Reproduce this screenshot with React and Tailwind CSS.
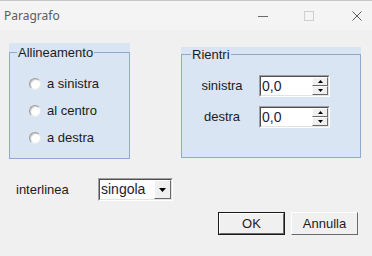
import React from "react";

const font = { fontFamily: '"Liberation Sans", Arial, sans-serif' };

const Radio = ({ label }) => (
  <div className="flex items-center h-[27px]">
    <span className="w-[12px] h-[12px] rounded-full bg-white border border-t-[#9a9a9a] border-l-[#9a9a9a] border-r-[#e8e8e8] border-b-[#e8e8e8] shadow-[inset_1px_1px_1px_#c8c8c8]" />
    <span className="ml-[6px] text-[13px] leading-[15px] text-[#1b1b1b]">{label}</span>
  </div>
);

const Arrow = ({ up }) => (
  <svg width="5" height="3" viewBox="0 0 5 3">
    {up ? <path d="M2.5 0 L5 3 L0 3 Z" fill="#000" /> : <path d="M0 0 L5 0 L2.5 3 Z" fill="#000" />}
  </svg>
);

const SpinBtn = ({ up }) => (
  <div className="flex-1 flex items-center justify-center bg-[#f0f0f0] border border-t-white border-l-white border-r-[#696969] border-b-[#696969]">
    <Arrow up={up} />
  </div>
);

// sunken numeric field with up/down spinner
const Spinner = ({ value }) => (
  <div className="w-[71px] h-[22px] border border-t-[#a0a0a0] border-l-[#a0a0a0] border-r-white border-b-white">
    <div className="h-full flex bg-white border border-t-[#505050] border-l-[#505050] border-r-[#e3e3e3] border-b-[#e3e3e3]">
      <span className="flex-1 pl-[1px] text-[14px] leading-[18px] text-[#1a1a3a]">{value}</span>
      <div className="w-[16px] flex flex-col">
        <SpinBtn up />
        <SpinBtn />
      </div>
    </div>
  </div>
);

const WinButton = ({ label, isDefault }) => (
  <div
    className={
      "w-[67px] h-[23px] " +
      (isDefault ? "border border-[#1a1a1a]" : "")
    }
  >
    <div className="h-full flex items-center justify-center bg-[#f0f0f0] border border-t-white border-l-white border-r-[#696969] border-b-[#696969] text-[13px] text-[#1b1b1b]">
      {label}
    </div>
  </div>
);

export default function App() {
  return (
    <div className="w-[372px] h-[256px] bg-[#f0f0f0] flex flex-col overflow-hidden" style={font}>
      {/* Title bar */}
      <div className="h-[30px] flex items-center bg-[#f4f4f4] border-t border-[#c8c8c8]">
        <span
          className="ml-[4px] text-[12px] text-[#5c5c5c]"
          style={{ fontFamily: '"Noto Sans", "Open Sans", sans-serif' }}
        >
          Paragrafo
        </span>
        <div className="ml-auto flex items-center mr-[10px]">
          <svg width="10" height="10" viewBox="0 0 10 10">
            <path d="M0 5.5 H10" stroke="#6a6a6a" strokeWidth="1" />
          </svg>
          <svg width="10" height="10" viewBox="0 0 10 10" className="ml-[36px]">
            <rect x="0.5" y="0.5" width="9" height="9" fill="none" stroke="#d0d0d0" strokeWidth="1" />
          </svg>
          <svg width="10" height="10" viewBox="0 0 10 10" className="ml-[38px]">
            <path d="M0.5 0.5 L9.5 9.5 M9.5 0.5 L0.5 9.5" stroke="#5a5a5a" strokeWidth="1" />
          </svg>
        </div>
      </div>

      {/* Group boxes */}
      <div className="flex items-start pl-[9px] pt-[13px]">
        <div className="w-[121px] h-[116px] bg-[#d9e5f3] pt-[2px] flex">
          <fieldset className="flex-1 border border-[#8eaace] px-0 pb-0 m-0">
            <legend className="ml-[7px] px-[1px] text-[13px] leading-[15px] text-[#1b1b1b]">
              Allineamento
            </legend>
            <div className="pl-[19px] pt-[10px] flex flex-col">
              <Radio label="a sinistra" />
              <Radio label="al centro" />
              <Radio label="a destra" />
            </div>
          </fieldset>
        </div>

        <div className="ml-[51px] mt-[4px] w-[180px] h-[111px] bg-[#d9e5f3] flex">
          <fieldset className="flex-1 border border-[#8eaace] px-0 pb-0 m-0">
            <legend className="ml-[9px] px-[1px] text-[13px] leading-[15px] text-[#1b1b1b]">
              Rientri
            </legend>
            <div className="pl-[18px] pt-[13px] flex flex-col gap-[9px]">
              <div className="flex items-center h-[22px]">
                <span className="w-[44px] text-center text-[13px] text-[#1b1b1b]">sinistra</span>
                <div className="ml-[15px]">
                  <Spinner value="0,0" />
                </div>
              </div>
              <div className="flex items-center h-[22px]">
                <span className="w-[44px] text-center text-[13px] text-[#1b1b1b]">destra</span>
                <div className="ml-[15px]">
                  <Spinner value="0,0" />
                </div>
              </div>
            </div>
          </fieldset>
        </div>
      </div>

      {/* Interlinea */}
      <div className="flex items-center mt-[19px] pl-[16px] h-[23px]">
        <span className="w-[82px] text-[13px] text-[#1b1b1b]">interlinea</span>
        <div className="w-[75px] h-[23px] border border-t-[#a0a0a0] border-l-[#a0a0a0] border-r-white border-b-white">
          <div className="h-full flex bg-white border border-t-[#505050] border-l-[#505050] border-r-[#e3e3e3] border-b-[#e3e3e3]">
            <span className="flex-1 pl-[1px] text-[14px] leading-[19px] text-[#1a1a3a]">singola</span>
            <div className="w-[17px] flex items-center justify-center bg-[#f0f0f0] border border-t-white border-l-white border-r-[#696969] border-b-[#696969]">
              <svg width="7" height="4" viewBox="0 0 7 4">
                <path d="M0 0 H7 L3.5 4 Z" fill="#000" />
              </svg>
            </div>
          </div>
        </div>
      </div>

      {/* Buttons */}
      <div className="flex justify-end gap-[6px] mt-[11px] pr-[14px]">
        <WinButton label="OK" isDefault />
        <WinButton label="Annulla" />
      </div>
    </div>
  );
}
